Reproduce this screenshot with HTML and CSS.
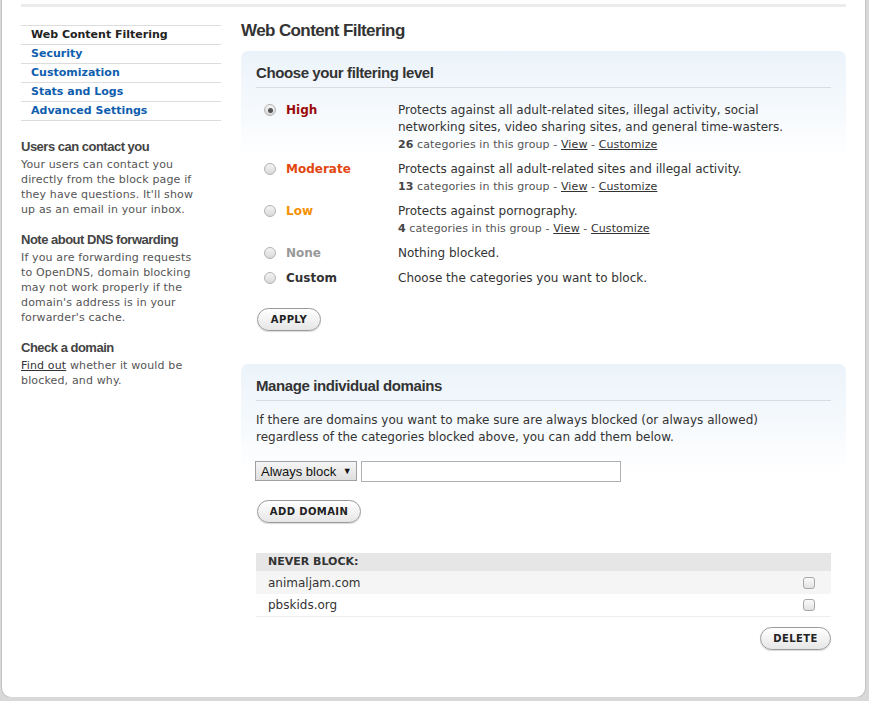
FILE: index.html
```html
<!DOCTYPE html>
<html>
<head>
<meta charset="utf-8">
<title>Web Content Filtering</title>
<link rel="stylesheet" href="styles.css">
</head>
<body>
<div class="page">
  <div class="topbar"></div>
  <div class="layout">
    <aside class="sidebar">
      <ul class="nav">
        <li class="nav-item current">Web Content Filtering</li>
        <li class="nav-item"><a href="#">Security</a></li>
        <li class="nav-item"><a href="#">Customization</a></li>
        <li class="nav-item"><a href="#">Stats and Logs</a></li>
        <li class="nav-item"><a href="#">Advanced Settings</a></li>
      </ul>
      <div class="note">
        <h3 class="note-title">Users can contact you</h3>
        <p class="note-text">Your users can contact you directly from the block page if they have questions. It'll show up as an email in your inbox.</p>
      </div>
      <div class="note">
        <h3 class="note-title">Note about DNS forwarding</h3>
        <p class="note-text">If you are forwarding requests to OpenDNS, domain blocking may not work properly if the domain's address is in your forwarder's cache.</p>
      </div>
      <div class="note">
        <h3 class="note-title">Check a domain</h3>
        <p class="note-text"><a class="plain-link" href="#">Find out</a><span> whether it would be blocked, and why.</span></p>
      </div>
    </aside>
    <main class="main">
      <h1 class="page-title">Web Content Filtering</h1>
      <section class="panel">
        <h2 class="panel-title">Choose your filtering level</h2>
        <div class="levels">
          <div class="level">
            <span class="radio checked"></span>
            <span class="level-name high">High</span>
            <div class="level-desc">
              <div>Protects against all adult-related sites, illegal activity, social networking sites, video sharing sites, and general time-wasters.</div>
              <div class="meta"><b>26</b> categories in this group - <a href="#">View</a> - <a href="#">Customize</a></div>
            </div>
          </div>
          <div class="level">
            <span class="radio"></span>
            <span class="level-name moderate">Moderate</span>
            <div class="level-desc">
              <div>Protects against all adult-related sites and illegal activity.</div>
              <div class="meta"><b>13</b> categories in this group - <a href="#">View</a> - <a href="#">Customize</a></div>
            </div>
          </div>
          <div class="level">
            <span class="radio"></span>
            <span class="level-name low">Low</span>
            <div class="level-desc">
              <div>Protects against pornography.</div>
              <div class="meta"><b>4</b> categories in this group - <a href="#">View</a> - <a href="#">Customize</a></div>
            </div>
          </div>
          <div class="level">
            <span class="radio"></span>
            <span class="level-name none">None</span>
            <div class="level-desc"><div>Nothing blocked.</div></div>
          </div>
          <div class="level">
            <span class="radio"></span>
            <span class="level-name custom">Custom</span>
            <div class="level-desc"><div>Choose the categories you want to block.</div></div>
          </div>
        </div>
        <button class="pill apply">APPLY</button>
      </section>

      <section class="panel panel-domains">
        <h2 class="panel-title">Manage individual domains</h2>
        <p class="panel-text">If there are domains you want to make sure are always blocked (or always allowed) regardless of the categories blocked above, you can add them below.</p>
        <div class="add-row">
          <span class="select">Always block <span class="arrow">▼</span></span>
          <span class="text-input"></span>
        </div>
        <button class="pill add">ADD DOMAIN</button>
        <div class="domain-table">
          <div class="table-head">NEVER BLOCK:</div>
          <div class="table-row shaded"><span>animaljam.com</span><span class="checkbox"></span></div>
          <div class="table-row"><span>pbskids.org</span><span class="checkbox"></span></div>
        </div>
        <div class="delete-row"><button class="pill delete">DELETE</button></div>
      </section>
    </main>
  </div>
</div>
</body>
</html>
```
FILE: styles.css
```css
html, body {
  margin: 0;
  padding: 0;
}
body {
  background: #d8d8d8;
  font-family: "DejaVu Sans", Verdana, sans-serif;
  color: #333;
}
.page {
  box-sizing: border-box;
  width: 863px;
  height: 697px;
  margin-left: 2px;
  padding: 4px 19px 0 19px;
  background: #fff;
  border-radius: 0 0 9px 9px;
  box-shadow: 0 0 0 1px #c4c4c4;
}
.topbar {
  height: 3px;
  background: #ececec;
}
.layout {
  display: flex;
  gap: 20px;
  margin-top: 14px;
}
.sidebar {
  width: 200px;
  flex: none;
}
.nav {
  list-style: none;
  margin: 4px 0 0 0;
  padding: 0;
  border-bottom: 1px solid #dcdcdc;
}
.nav-item {
  border-top: 1px solid #dcdcdc;
  height: 18px;
  line-height: 18px;
  padding-left: 10px;
  font-size: 11px;
  font-weight: bold;
}
.nav-item a {
  color: #0f5eae;
  text-decoration: none;
}
.nav-item.current {
  color: #222;
}
.note {
  margin-top: 15px;
}
.note:first-of-type {
  margin-top: 18px;
}
.note-title {
  margin: 0;
  font-family: "Liberation Sans", Arial, sans-serif;
  font-size: 13px;
  line-height: 16px;
  font-weight: bold;
  letter-spacing: -0.5px;
  color: #444;
}
.note-text {
  margin: 2px 0 0 0;
  padding-right: 22px;
  font-size: 11px;
  line-height: 15px;
  letter-spacing: 0.15px;
  color: #555;
}
.plain-link {
  color: #333;
}
.main {
  flex: 1;
  min-width: 0;
}
.page-title {
  margin: 0 0 10px 0;
  font-family: "Liberation Sans", Arial, sans-serif;
  font-size: 17px;
  line-height: 20px;
  font-weight: bold;
  letter-spacing: -0.6px;
  color: #333;
}
.panel {
  border-radius: 7px;
  background: linear-gradient(#ebf3fa, #ffffff 110px);
  padding: 13px 15px 0 15px;
}
.panel-domains {
  margin-top: 33px;
}
.panel-title {
  margin: 0;
  padding-bottom: 5px;
  border-bottom: 1px solid #d6dce2;
  font-family: "Liberation Sans", Arial, sans-serif;
  font-size: 15px;
  line-height: 18px;
  font-weight: bold;
  letter-spacing: -0.4px;
  color: #333;
}
.levels {
  margin-top: 10px;
}
.level {
  display: flex;
  align-items: flex-start;
  padding: 4px 0;
  font-size: 12px;
  line-height: 17px;
}
.radio {
  flex: none;
  box-sizing: border-box;
  width: 12px;
  height: 12px;
  margin: 2px 10px 0 8px;
  border-radius: 50%;
  border: 1px solid #b3b3b3;
  background: linear-gradient(#f4f4f4, #d9d9d9);
  position: relative;
}
.radio.checked::after {
  content: "";
  position: absolute;
  left: 2.5px;
  top: 2.5px;
  width: 5px;
  height: 5px;
  border-radius: 50%;
  background: #555;
}
.level-name {
  flex: none;
  width: 112px;
  font-weight: bold;
}
.level-name.high { color: #9b0a0a; }
.level-name.moderate { color: #e2470f; }
.level-name.low { color: #f59100; }
.level-name.none { color: #999; }
.level-name.custom { color: #333; }
.level-desc {
  width: 400px;
  flex: none;
  color: #333;
}
.meta {
  font-size: 11px;
  letter-spacing: 0.1px;
  color: #555;
}
.meta b {
  color: #444;
}
.meta a {
  color: #333;
}
.pill {
  display: block;
  box-sizing: border-box;
  height: 23px;
  padding: 0;
  border: 1px solid #9a9a9a;
  border-radius: 12px;
  background: linear-gradient(#ffffff, #e6e6e6);
  font-family: "DejaVu Sans", Verdana, sans-serif;
  font-size: 10px;
  font-weight: bold;
  letter-spacing: 0.4px;
  white-space: nowrap;
  text-align: center;
  color: #222;
  box-shadow: 0 1px 1px rgba(0,0,0,0.15);
}
.apply {
  margin: 17px 0 0 1px;
  width: 64px;
}
.panel-text {
  margin: 11px 0 0 0;
  max-width: 540px;
  font-size: 12px;
  line-height: 17px;
  color: #333;
}
.add-row {
  display: flex;
  gap: 4px;
  margin-top: 15px;
  align-items: flex-start;
}
.select {
  box-sizing: border-box;
  width: 102px;
  height: 20px;
  border: 1px solid #a0a0a0;
  background: linear-gradient(#f6f6f6, #dedede);
  font-family: "Liberation Sans", Arial, sans-serif;
  font-size: 13px;
  line-height: 18px;
  padding-left: 5px;
  color: #111;
  margin-left: -1px;
}
.arrow {
  font-size: 9px;
  margin-left: 3px;
  vertical-align: 2px;
}
.text-input {
  box-sizing: border-box;
  width: 260px;
  height: 21px;
  border: 1px solid #b0b0b0;
  background: #fff;
}
.add {
  margin: 18px 0 0 1px;
  width: 104px;
}
.domain-table {
  margin-top: 30px;
}
.table-head {
  height: 18px;
  line-height: 18px;
  background: #e6e6e6;
  padding-left: 12px;
  font-size: 11px;
  font-weight: bold;
  color: #333;
}
.table-row {
  display: flex;
  justify-content: space-between;
  align-items: center;
  box-sizing: border-box;
  height: 23px;
  padding: 0 16px 0 12px;
  font-size: 12px;
  color: #333;
  border-bottom: 1px solid #eeeeee;
}
.table-row.shaded {
  background: #f5f5f5;
  border-bottom: none;
}
.checkbox {
  box-sizing: border-box;
  width: 12px;
  height: 12px;
  border: 1px solid #a8a8a8;
  border-radius: 3px;
  background: linear-gradient(#fafafa, #e2e2e2);
}
.delete-row {
  display: flex;
  justify-content: flex-end;
  margin-top: 10px;
}
.delete {
  width: 71px;
}
```
